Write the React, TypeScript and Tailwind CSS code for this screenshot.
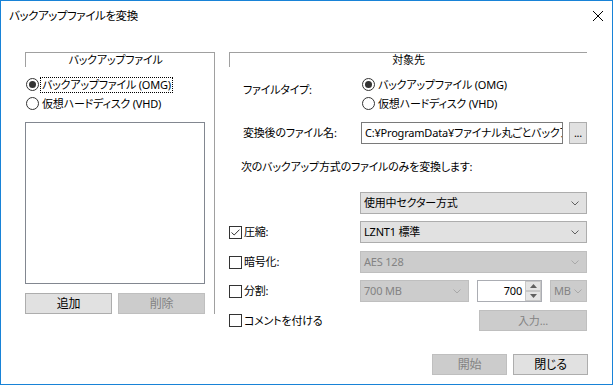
import React from "react";

const line = "border-[#a0a0a0]";

const Radio = ({ checked }: { checked?: boolean }) => (
  <span className="w-[13px] h-[13px] rounded-full border border-[#333333] bg-white flex items-center justify-center shrink-0">
    {checked && <span className="w-[7px] h-[7px] rounded-full bg-[#333333]" />}
  </span>
);

const Check = ({ checked }: { checked?: boolean }) => (
  <span className="w-[13px] h-[13px] border border-[#333333] bg-white flex items-center justify-center shrink-0">
    {checked && (
      <svg width="9" height="7" viewBox="0 0 9 7">
        <path d="M0.5 3.5 L3.2 6 L8.5 0.6" fill="none" stroke="#333333" strokeWidth="1" />
      </svg>
    )}
  </span>
);

const Chevron = ({ disabled }: { disabled?: boolean }) => (
  <svg width="8" height="5" viewBox="0 0 8 5" className="shrink-0">
    <path d="M0.5 0.5 L4 4 L7.5 0.5" fill="none" stroke={disabled ? "#a8a8a8" : "#606060"} strokeWidth="1" />
  </svg>
);

const Combo = ({ text, disabled, className = "" }: { text: string; disabled?: boolean; className?: string }) => (
  <div
    className={`flex items-center justify-between h-[22px] border pl-[3px] ${
      disabled ? "bg-[#cccccc] border-[#bfbfbf] text-[#838383]" : "bg-[#e1e1e1] border-[#adadad] text-black"
    } ${className}`}
  >
    <span className="whitespace-nowrap">{text}</span>
    <Chevron disabled={disabled} />
  </div>
);

const Btn = ({ label, disabled, className = "" }: { label: string; disabled?: boolean; className?: string }) => (
  <div
    className={`flex items-center justify-center h-[21px] border ${
      disabled ? "bg-[#cccccc] border-[#bfbfbf] text-[#838383]" : "bg-[#e1e1e1] border-[#adadad] text-black"
    } ${className}`}
  >
    {label}
  </div>
);

const App = () => {
  return (
    <div className="w-[613px] h-[385px] border border-[#1883d7] bg-white flex flex-col text-[11px] tracking-[-0.2px] leading-[14px] text-black font-['Noto_Sans','Noto_Sans_CJK_JP',sans-serif] [font-feature-settings:'palt']">
      {/* title bar */}
      <div className="h-[30px] flex items-center justify-between pl-[8px] pr-[9px]">
        <span className="text-[11.5px] tracking-[-0.4px]">バックアップファイルを変換</span>
        <svg width="10" height="10" viewBox="0 0 10 10">
          <path d="M0 0 L10 10 M10 0 L0 10" stroke="#000" strokeWidth="1" />
        </svg>
      </div>

      {/* body */}
      <div className="flex items-start mt-[21px]">
        {/* left group */}
        <div className={`ml-[24px] w-[190px] border-t border-r ${line} flex flex-col`}>
          <div className={`h-[14px] w-[180px] border-l ${line} text-center`}>バックアップファイル</div>
          <div className="mt-[8px] flex flex-col">
            <div className="h-[19px] flex items-center">
              <span className="ml-[1px]"><Radio checked /></span>
              <span className="ml-[1px] border border-dotted border-black px-[1px] h-[16px] leading-[14px]">
                バックアップファイル (OMG)
              </span>
            </div>
            <div className="h-[19px] flex items-center">
              <span className="ml-[1px]"><Radio /></span>
              <span className="ml-[3px]">仮想ハードディスク (VHD)</span>
            </div>
          </div>
          <div className="mt-[9px] w-[180px] h-[162px] border border-[#828790] bg-white" />
          <div className="mt-[9px] w-[180px] flex justify-between">
            <Btn label="追加" className="w-[87px] text-[12px]" />
            <Btn label="削除" disabled className="w-[87px] text-[12px]" />
          </div>
        </div>

        {/* right group */}
        <div className="ml-[14px] w-[358px] flex flex-col">
          <div className={`h-[15px] border-t border-l ${line} text-center`}>対象先</div>

          <div className="mt-[8px] flex">
            <div className="w-[131px] pl-[14px] pt-[8px]">ファイルタイプ:</div>
            <div className="flex flex-col">
              <div className="h-[19px] flex items-center">
                <span className="ml-[2px]"><Radio checked /></span>
                <span className="ml-[3px]">バックアップファイル (OMG)</span>
              </div>
              <div className="h-[19px] flex items-center">
                <span className="ml-[2px]"><Radio /></span>
                <span className="ml-[3px]">仮想ハードディスク (VHD)</span>
              </div>
            </div>
          </div>

          <div className="mt-[9px] h-[22px] flex items-center">
            <div className="w-[131px] pl-[14px]">変換後のファイル名:</div>
            <div className="ml-[1px] w-[202px] h-[22px] border border-[#7a7a7a] bg-white flex items-center pl-[3px] overflow-hidden">
              <span className="whitespace-nowrap">C:¥ProgramData¥ファイナル丸ごとバックア</span>
            </div>
            <Btn label="..." className="ml-[6px] w-[18px] h-[22px] leading-[10px]" />
          </div>

          <div className="mt-[16px] pl-[12px]">次のバックアップ方式のファイルのみを変換します:</div>

          <Combo text="使用中セクター方式" className="mt-[18px] ml-[131px] w-[227px] pr-[7px]" />

          <div className="mt-[7px] h-[22px] flex items-center">
            <div className="w-[131px] flex items-center">
              <Check checked />
              <span className="ml-[2px]">圧縮:</span>
            </div>
            <Combo text="LZNT1 標準" className="w-[227px] pr-[7px]" />
          </div>

          <div className="mt-[8px] h-[22px] flex items-center">
            <div className="w-[131px] flex items-center">
              <Check />
              <span className="ml-[2px]">暗号化:</span>
            </div>
            <Combo text="AES 128" disabled className="w-[227px] pr-[7px]" />
          </div>

          <div className="mt-[7px] h-[22px] flex items-center">
            <div className="w-[131px] flex items-center">
              <Check />
              <span className="ml-[2px]">分割:</span>
            </div>
            <Combo text="700 MB" disabled className="w-[109px] pr-[7px]" />
            <div className="ml-[8px] w-[65px] h-[22px] border border-[#abadb3] bg-white flex">
              <div className="flex-1 flex items-center justify-end pr-[3px]">700</div>
              <div className="w-[16px] flex flex-col">
                <div className="flex-1 bg-[#e5e5e5] border border-[#c8c8c8] flex items-center justify-center">
                  <svg width="7" height="4" viewBox="0 0 7 4"><path d="M3.5 0 L7 4 L0 4 Z" fill="#606060" /></svg>
                </div>
                <div className="flex-1 bg-[#e5e5e5] border border-[#c8c8c8] flex items-center justify-center">
                  <svg width="7" height="4" viewBox="0 0 7 4"><path d="M0 0 L7 0 L3.5 4 Z" fill="#606060" /></svg>
                </div>
              </div>
            </div>
            <Combo text="MB" disabled className="ml-[8px] w-[37px] pr-[4px]" />
          </div>

          <div className="mt-[8px] h-[21px] flex items-center">
            <div className="w-[131px] flex items-center">
              <Check />
              <span className="ml-[2px]">コメントを付ける</span>
            </div>
            <Btn label="入力..." disabled className="ml-[119px] w-[108px]" />
          </div>
        </div>
      </div>

      {/* bottom buttons */}
      <div className="mt-[23px] flex justify-end gap-[6px] pr-[24px]">
        <Btn label="開始" disabled className="w-[75px] text-[12px]" />
        <Btn label="閉じる" className="w-[75px] text-[12px]" />
      </div>
    </div>
  );
};

export default App;
